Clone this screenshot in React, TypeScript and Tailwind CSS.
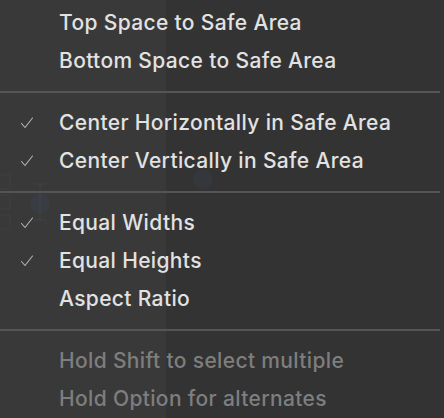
import React from 'react';

type Item = { label: string; checked?: boolean; disabled?: boolean };

const sections: Item[][] = [
  [{ label: 'Top Space to Safe Area' }, { label: 'Bottom Space to Safe Area' }],
  [
    { label: 'Center Horizontally in Safe Area', checked: true },
    { label: 'Center Vertically in Safe Area', checked: true },
  ],
  [
    { label: 'Equal Widths', checked: true },
    { label: 'Equal Heights', checked: true },
    { label: 'Aspect Ratio' },
  ],
  [
    { label: 'Hold Shift to select multiple', disabled: true },
    { label: 'Hold Option for alternates', disabled: true },
  ],
];

function Check() {
  return (
    <svg width="14" height="12" viewBox="0 0 14 12" fill="none">
      <path d="M1.5 6.5 L5 10.5 L12.5 1" stroke="#b5b5b5" strokeWidth="1.1" strokeLinecap="round" strokeLinejoin="round" />
    </svg>
  );
}

export default function App() {
  return (
    <div
      className="relative h-[418px] w-[444px] overflow-hidden bg-[linear-gradient(to_right,#393939_166px,#333333_166px)] pt-[4px]"
      style={{ fontFamily: 'Inter, "Noto Sans", sans-serif' }}
    >
      {/* faint canvas behind the menu */}
      <svg className="absolute left-0 top-[170px] opacity-60" width="80" height="80" viewBox="0 0 80 80" fill="none">
        <rect x="-4" y="5" width="14" height="14" stroke="#444" />
        <rect x="-4" y="25" width="14" height="14" stroke="#444" />
        <rect x="-4" y="45" width="14" height="14" stroke="#444" />
        <circle cx="40" cy="33" r="10" fill="#3a3f4a" />
        <path d="M34 14 H46 M40 14 V50 M34 50 H46" stroke="#4a4a4a" />
      </svg>
      <svg className="absolute left-[192px] top-[168px] opacity-60" width="22" height="22" viewBox="0 0 22 22">
        <circle cx="11" cy="11" r="10" fill="#363a42" />
      </svg>

      <div className="relative flex flex-col">
        {sections.map((section, si) => (
          <div key={si} className="flex flex-col">
            {si > 0 && (
              <div className="flex h-6 items-center pr-1">
                <div className="h-[2px] w-full bg-[#555555]" />
              </div>
            )}
            {section.map((item) => (
              <div key={item.label} className="flex h-[38px] items-center">
                <div className="flex w-[59px] shrink-0 justify-start pl-5">
                  {item.checked && <Check />}
                </div>
                <span
                  className={
                    item.disabled
                      ? 'text-[21px] font-medium tracking-[0.35px] text-[#7e7e7e]'
                      : 'text-[21px] font-medium tracking-[0.35px] text-[#e2e2e2]'
                  }
                >
                  {item.label}
                </span>
              </div>
            ))}
          </div>
        ))}
      </div>
    </div>
  );
}
